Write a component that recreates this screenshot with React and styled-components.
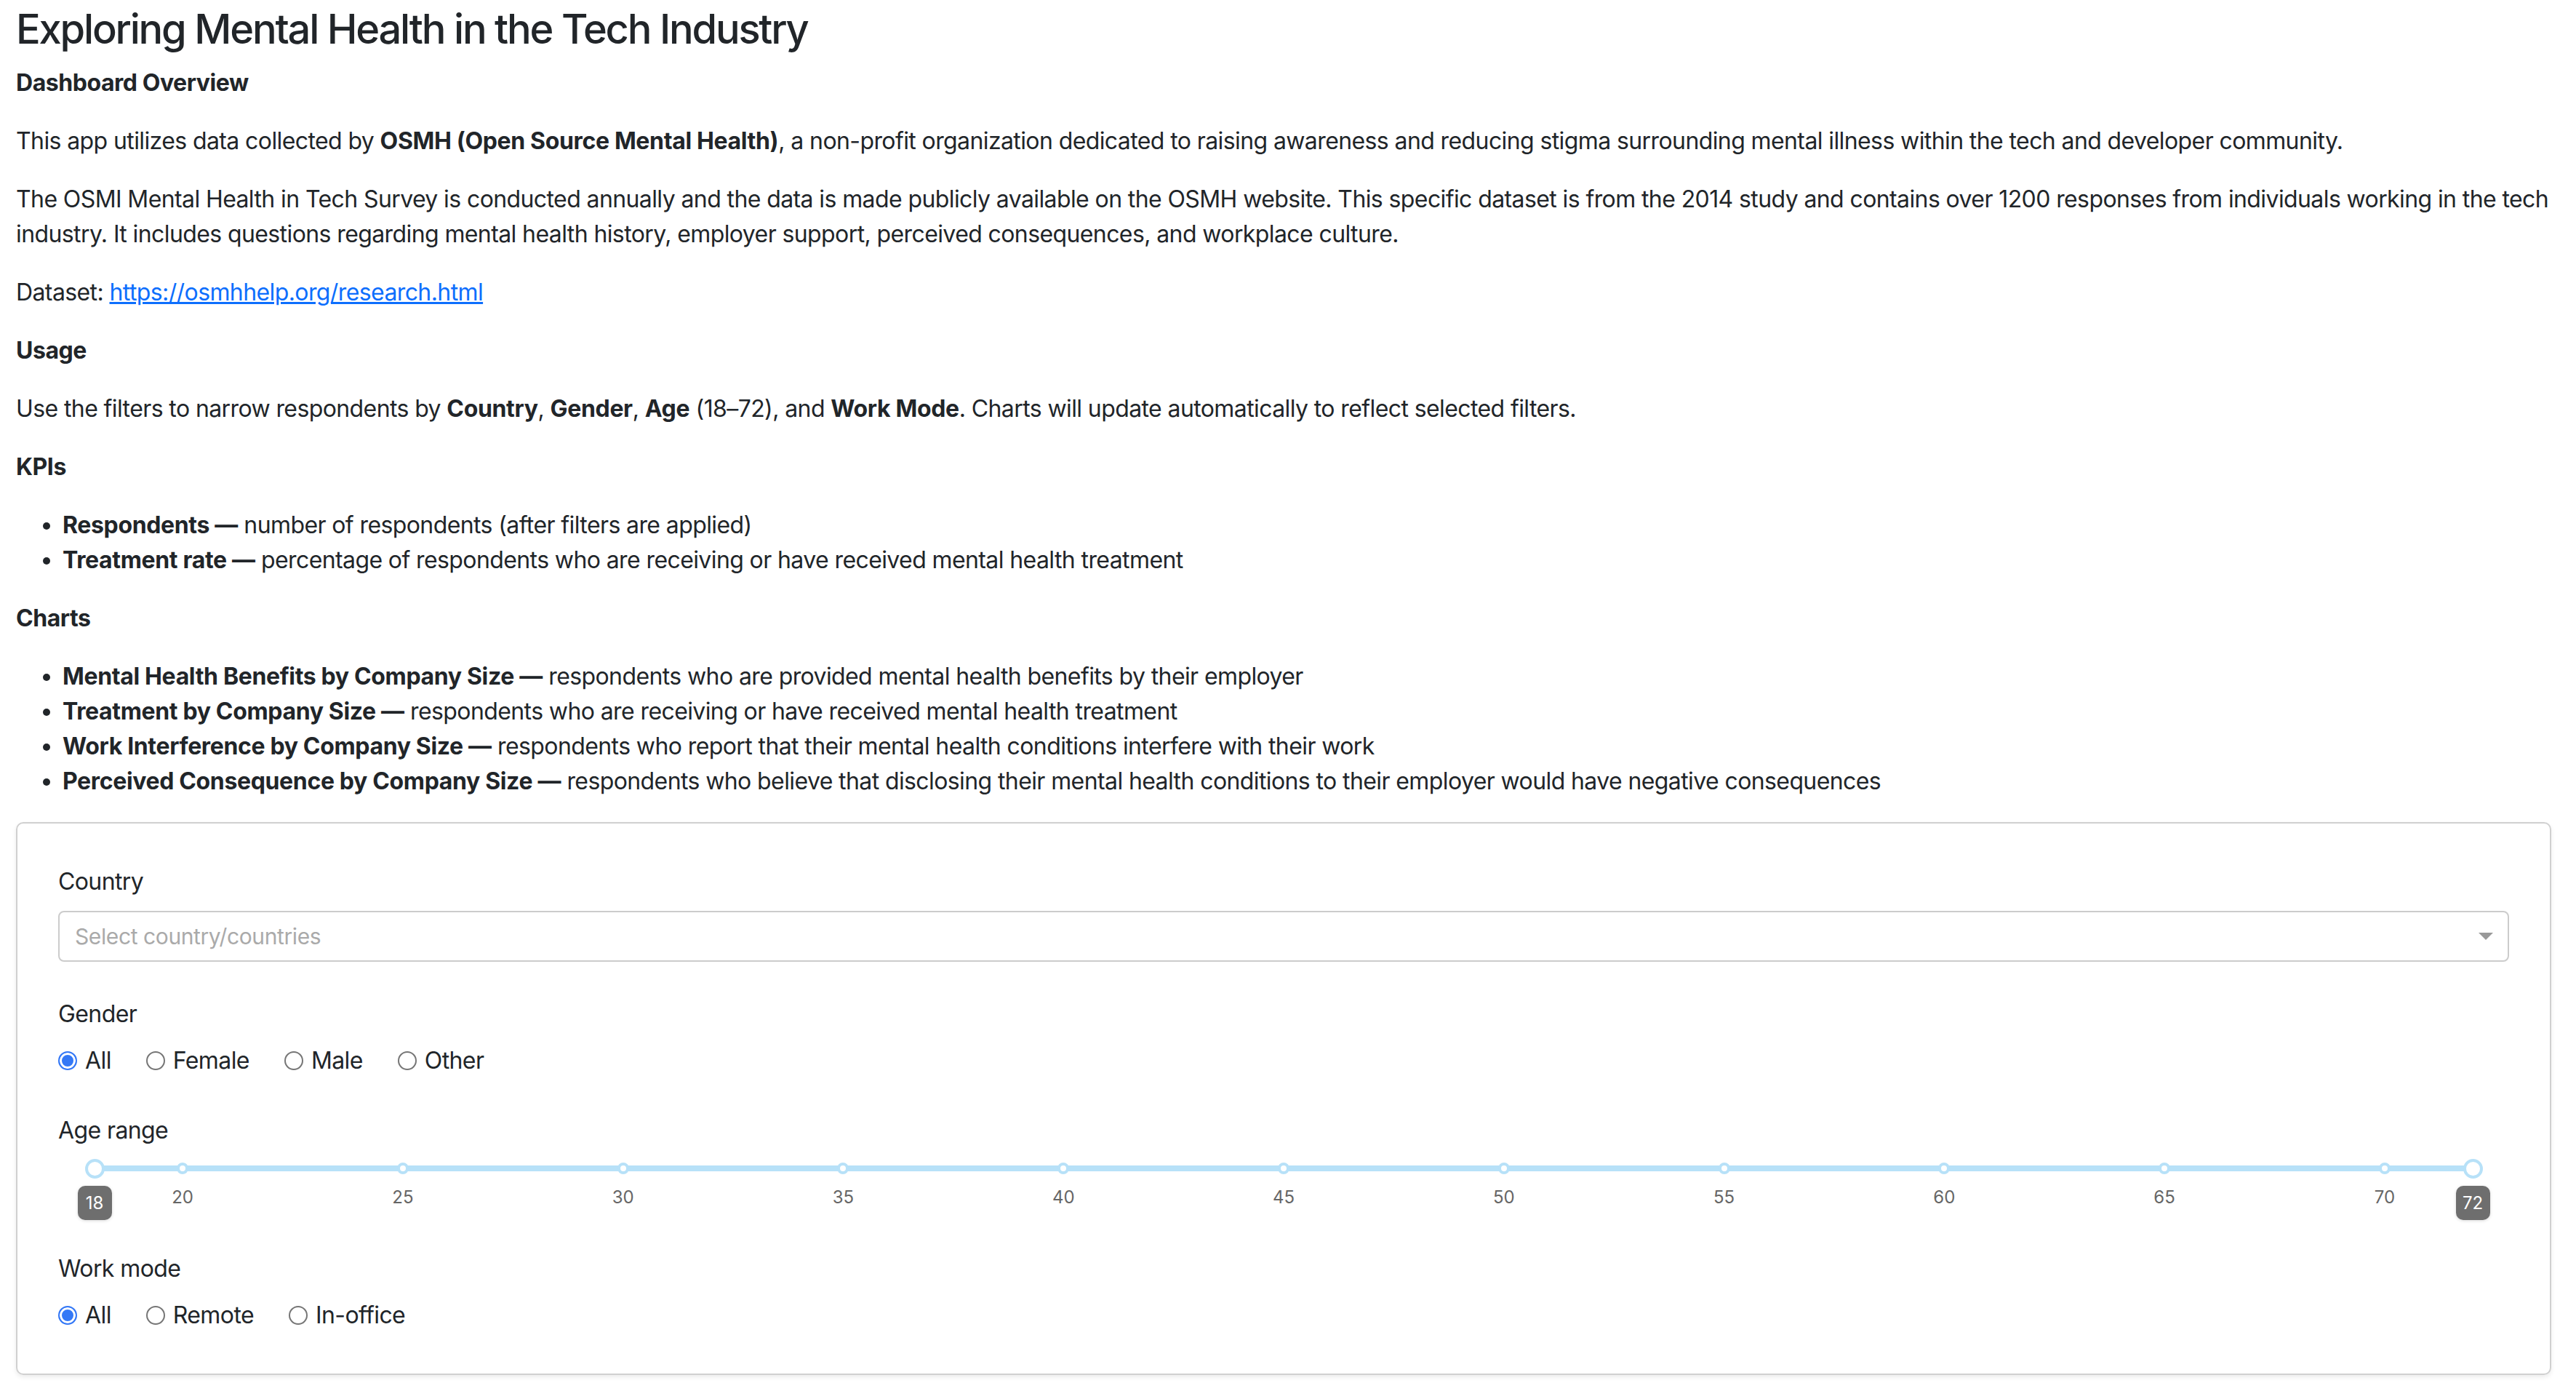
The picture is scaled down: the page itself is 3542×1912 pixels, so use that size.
import React, { useState } from "react";
import styled, { createGlobalStyle } from "styled-components";

// Dashboard intro page with the filter card (country, gender, age, work mode)

const GlobalStyle = createGlobalStyle`
  html, body {
    margin: 0;
    padding: 0;
    background: #fff;
  }
  body {
    font-family: Inter, "Noto Sans", "Liberation Sans", sans-serif;
    font-size: 32px;
    line-height: 48px;
    letter-spacing: -0.6px;
    color: #212529;
  }
  b {
    font-weight: 700;
    letter-spacing: -0.35px;
  }
  * {
    box-sizing: border-box;
  }
`;

const AGE_MIN = 18;
const AGE_MAX = 72;
const AGE_MARKS = [20, 25, 30, 35, 40, 45, 50, 55, 60, 65, 70];

const pct = (v) => ((v - AGE_MIN) / (AGE_MAX - AGE_MIN)) * 100;

const RadioGroup = ({ options, value, onChange }) => (
  <RadioRow>
    {options.map((opt) => (
      <RadioItem key={opt} onClick={() => onChange(opt)}>
        <RadioDot $checked={value === opt} />
        <span>{opt}</span>
      </RadioItem>
    ))}
  </RadioRow>
);

const AgeSlider = ({ low, high }) => (
  <SliderWrap>
    <Track />
    {AGE_MARKS.map((m) => (
      <React.Fragment key={m}>
        <TickDot style={{ left: `${pct(m)}%` }} />
        <TickLabel style={{ left: `${pct(m)}%` }}>{m}</TickLabel>
      </React.Fragment>
    ))}
    <Handle style={{ left: `${pct(low)}%` }} />
    <Handle style={{ left: `${pct(high)}%` }} />
    <Badge style={{ left: `${pct(low)}%` }}>{low}</Badge>
    <Badge style={{ left: `${pct(high)}%` }}>{high}</Badge>
  </SliderWrap>
);

const App = () => {
  const [gender, setGender] = useState("All");
  const [mode, setMode] = useState("All");

  return (
    <Page>
      <GlobalStyle />
      <Title>Exploring Mental Health in the Tech Industry</Title>
      <Heading>Dashboard Overview</Heading>
      <Para>
        This app utilizes data collected by{" "}
        <b>OSMH (Open Source Mental Health)</b>, a non-profit organization
        dedicated to raising awareness and reducing stigma surrounding mental
        illness within the tech and developer community.
      </Para>
      <Para>
        The OSMI Mental Health in Tech Survey is conducted annually and the data
        is made publicly available on the OSMH website. This specific dataset is
        from the 2014 study and contains over 1200 responses from individuals
        working in the tech industry. It includes questions regarding mental
        health history, employer support, perceived consequences, and workplace
        culture.
      </Para>
      <Para>
        Dataset:{" "}
        <DataLink href="#">https://osmhhelp.org/research.html</DataLink>
      </Para>

      <Heading>Usage</Heading>
      <Para>
        Use the filters to narrow respondents by <b>Country</b>, <b>Gender</b>,{" "}
        <b>Age</b> (18–72), and <b>Work Mode</b>. Charts will update
        automatically to reflect selected filters.
      </Para>

      <Heading>KPIs</Heading>
      <List>
        <li>
          <b>Respondents —</b> number of respondents (after filters are applied)
        </li>
        <li>
          <b>Treatment rate —</b> percentage of respondents who are receiving or
          have received mental health treatment
        </li>
      </List>

      <Heading>Charts</Heading>
      <List>
        <li>
          <b>Mental Health Benefits by Company Size —</b> respondents who are
          provided mental health benefits by their employer
        </li>
        <li>
          <b>Treatment by Company Size —</b> respondents who are receiving or
          have received mental health treatment
        </li>
        <li>
          <b>Work Interference by Company Size —</b> respondents who report that
          their mental health conditions interfere with their work
        </li>
        <li>
          <b>Perceived Consequence by Company Size —</b> respondents who believe
          that disclosing their mental health conditions to their employer would
          have negative consequences
        </li>
      </List>

      <FilterCard>
        <Group>
          <FieldLabel>Country</FieldLabel>
          <SelectBox>
            <Placeholder>Select country/countries</Placeholder>
            <Caret />
          </SelectBox>
        </Group>

        <Group>
          <FieldLabel>Gender</FieldLabel>
          <RadioGroup
            options={["All", "Female", "Male", "Other"]}
            value={gender}
            onChange={setGender}
          />
        </Group>

        <Group>
          <FieldLabel>Age range</FieldLabel>
          <AgeSlider low={18} high={72} />
        </Group>

        <Group>
          <FieldLabel>Work mode</FieldLabel>
          <RadioGroup
            options={["All", "Remote", "In-office"]}
            value={mode}
            onChange={setMode}
          />
        </Group>
      </FilterCard>
    </Page>
  );
};

const Page = styled.div`
  padding: 7px 34px 24px 22px;
`;

const Title = styled.h1`
  margin: 0 0 16px;
  font-size: 56px;
  line-height: 1.2;
  font-weight: 500;
  letter-spacing: -2.2px;
`;

const Heading = styled.p`
  margin: 0 0 32px;
  font-weight: 700;
  letter-spacing: -0.45px;
`;

const Para = styled.p`
  margin: 0 0 32px;
`;

const DataLink = styled.a`
  color: #0d6efd;
  text-decoration: underline;
`;

const List = styled.ul`
  margin: 0 0 32px;
  padding-left: 64px;
`;

const FilterCard = styled.div`
  border: 2px solid #d0d0d0;
  border-radius: 10px;
  padding: 56px;
  box-shadow: 0 3px 6px rgba(0, 0, 0, 0.08);
`;

const Group = styled.div`
  margin-bottom: 48px;

  &:last-child {
    margin-bottom: 0;
  }
`;

const FieldLabel = styled.div`
  margin-bottom: 16px;
`;

const SelectBox = styled.div`
  height: 70px;
  border: 2px solid #cccccc;
  border-radius: 8px;
  display: flex;
  align-items: center;
  justify-content: space-between;
  padding: 0 20px 0 21px;
`;

const Placeholder = styled.span`
  font-size: 30px;
  letter-spacing: -0.4px;
  color: #aaaaaa;
`;

const Caret = styled.span`
  width: 0;
  height: 0;
  border-left: 10px solid transparent;
  border-right: 10px solid transparent;
  border-top: 10px solid #999999;
`;

const RadioRow = styled.div`
  display: flex;
  align-items: center;
  height: 48px;
`;

const RadioItem = styled.label`
  display: flex;
  align-items: center;
  gap: 11px;
  margin-right: 48px;
  cursor: pointer;
`;

const RadioDot = styled.span`
  width: 26px;
  height: 26px;
  border-radius: 50%;
  flex-shrink: 0;
  border: 2px solid ${(p) => (p.$checked ? "#3478f6" : "#767676")};
  background: ${(p) => (p.$checked ? "#3478f6" : "#fff")};
  box-shadow: ${(p) => (p.$checked ? "inset 0 0 0 3px #fff" : "none")};
`;

const SliderWrap = styled.div`
  position: relative;
  height: 78px;
  margin: 0 50px;
`;

const Track = styled.div`
  position: absolute;
  left: 0;
  right: 0;
  top: 8px;
  height: 8px;
  border-radius: 4px;
  background: #b7e1f8;
`;

const TickDot = styled.span`
  position: absolute;
  top: 4px;
  width: 16px;
  height: 16px;
  margin-left: -8px;
  border-radius: 50%;
  background: #fff;
  border: 4px solid #b7e1f8;
`;

const TickLabel = styled.span`
  position: absolute;
  top: 38px;
  transform: translateX(-50%);
  font-size: 24px;
  line-height: 28px;
  letter-spacing: 0;
  color: #666666;
`;

const Handle = styled.span`
  position: absolute;
  top: -1px;
  width: 27px;
  height: 27px;
  margin-left: -13.5px;
  border-radius: 50%;
  background: #fff;
  border: 4px solid #b7e1f8;
`;

const Badge = styled.span`
  position: absolute;
  top: 36px;
  width: 47px;
  height: 47px;
  margin-left: -23.5px;
  border-radius: 10px;
  background: #6e6e6e;
  color: #fff;
  font-size: 24px;
  line-height: 47px;
  letter-spacing: 0;
  text-align: center;
  box-shadow: 0 1px 4px rgba(0, 0, 0, 0.15);
`;

export default App;
